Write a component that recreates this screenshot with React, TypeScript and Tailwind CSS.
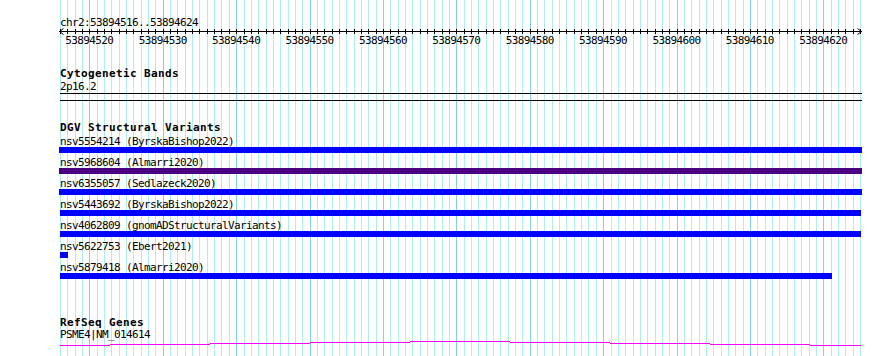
import React from 'react'

const PX_PER_BP = 7.34
const ORIGIN = 60

const variants = [
  { id: 'nsv5554214', src: 'ByrskaBishop2022', color: 'bg-[#0000ff]', left: 59, right: 862 },
  { id: 'nsv5968604', src: 'Almarri2020', color: 'bg-[#4b0082]', left: 59, right: 862 },
  { id: 'nsv6355057', src: 'Sedlazeck2020', color: 'bg-[#0000ff]', left: 59, right: 862 },
  { id: 'nsv5443692', src: 'ByrskaBishop2022', color: 'bg-[#0000ff]', left: 60, right: 861 },
  { id: 'nsv4062809', src: 'gnomADStructuralVariants', color: 'bg-[#0000ff]', left: 60, right: 861 },
  { id: 'nsv5622753', src: 'Ebert2021', color: 'bg-[#0000ff]', left: 60, right: 68 },
  { id: 'nsv5879418', src: 'Almarri2020', color: 'bg-[#0000ff]', left: 60, right: 832 },
]

// gene model steps: [x1, x2, y]
const geneSteps: [number, number, number][] = [
  [60, 110, 1.5],
  [110, 210, 0.5],
  [210, 310, -0.5],
  [310, 410, -1.5],
  [410, 510, -2.5],
  [510, 610, -1.5],
  [610, 710, -0.5],
  [710, 810, 0.5],
  [810, 861, 1.5],
]

const tickLabels = Array.from({ length: 11 }, (_, i) => 53894520 + i * 10)

const small = "font-['DejaVu_Sans_Mono',monospace] text-[11px] tracking-[-0.62px] text-black whitespace-pre"
const bold = "font-['DejaVu_Sans_Mono',monospace] text-[11px] font-bold tracking-[0.38px] text-black whitespace-pre"

function Grid() {
  const lines = Array.from({ length: 110 }, (_, i) => i)
  return (
    <svg className="absolute inset-0" width={890} height={356}>
      {lines.map(i => {
        const x = Math.round(ORIGIN + i * PX_PER_BP) + 0.5
        const major = i % 10 === 4
        return (
          <line key={i} x1={x} x2={x} y1={0} y2={356} stroke={major ? '#87ceeb' : '#afeeee'} strokeWidth={1} />
        )
      })}
    </svg>
  )
}

function Ruler() {
  const ticks = Array.from({ length: 110 }, (_, i) => Math.round(ORIGIN + i * PX_PER_BP) + 0.5)
  return (
    <svg width={890} height={7} className="block">
      <line x1={59} x2={862} y1={3.5} y2={3.5} stroke="#000" />
      {ticks.map((x, i) => (
        <line key={i} x1={x} x2={x} y1={1} y2={6} stroke="#000" />
      ))}
      <path d="M63.5 0.5 L59.5 3.5 L63.5 6.5" fill="none" stroke="#000" />
      <path d="M857.5 0.5 L861.5 3.5 L857.5 6.5" fill="none" stroke="#000" />
    </svg>
  )
}

export default function App() {
  return (
    <div className="relative w-[890px] h-[356px] overflow-hidden bg-white">
      <Grid />
      <div className="relative flex flex-col">
        <div className={`${small} ml-[60px] mt-[17px] leading-[11px] h-[11px]`}>chr2:53894516..53894624</div>
        <Ruler />
        <div className="flex ml-[52.66px] h-[11px]">
          {tickLabels.map(t => (
            <div key={t} className={`${small} w-[73.4px] shrink-0 text-center leading-[11px]`}>{t}</div>
          ))}
        </div>

        <div className={`${bold} ml-[60px] mt-[22px] leading-[12px] h-[12px]`}>Cytogenetic Bands</div>
        <div className={`${small} ml-[60px] mt-px leading-[11px] h-[11px]`}>2p16.2</div>
        <div className="ml-[60px] mt-px w-[802px] h-px bg-black" />
        <div className="ml-[60px] mt-[6px] w-[802px] h-px bg-black" />

        <div className={`${bold} ml-[60px] mt-[21px] leading-[12px] h-[12px]`}>DGV Structural Variants</div>
        <div className="mt-[2px] flex flex-col gap-[4px]">
          {variants.map(v => (
            <div key={v.id} className="flex flex-col">
              <div className={`${small} ml-[60px] leading-[11px] h-[11px]`}>{`${v.id} (${v.src})`}</div>
              <div
                className={`h-[6px] ${v.color}`}
                style={{ marginLeft: v.left, width: v.right - v.left }}
              />
            </div>
          ))}
        </div>

        <div className={`${bold} ml-[60px] mt-[38px] leading-[12px] h-[12px]`}>RefSeq Genes</div>
        <div className={`${small} ml-[60px] leading-[11px] h-[11px]`}>PSME4|NM_014614</div>
        <svg width={890} height={16} className="block">
          {geneSteps.map(([x1, x2, y], i) => (
            <line key={i} x1={x1} x2={x2} y1={y + 4} y2={y + 4} stroke="#ff00ff" strokeWidth={1} />
          ))}
        </svg>
      </div>
    </div>
  )
}
